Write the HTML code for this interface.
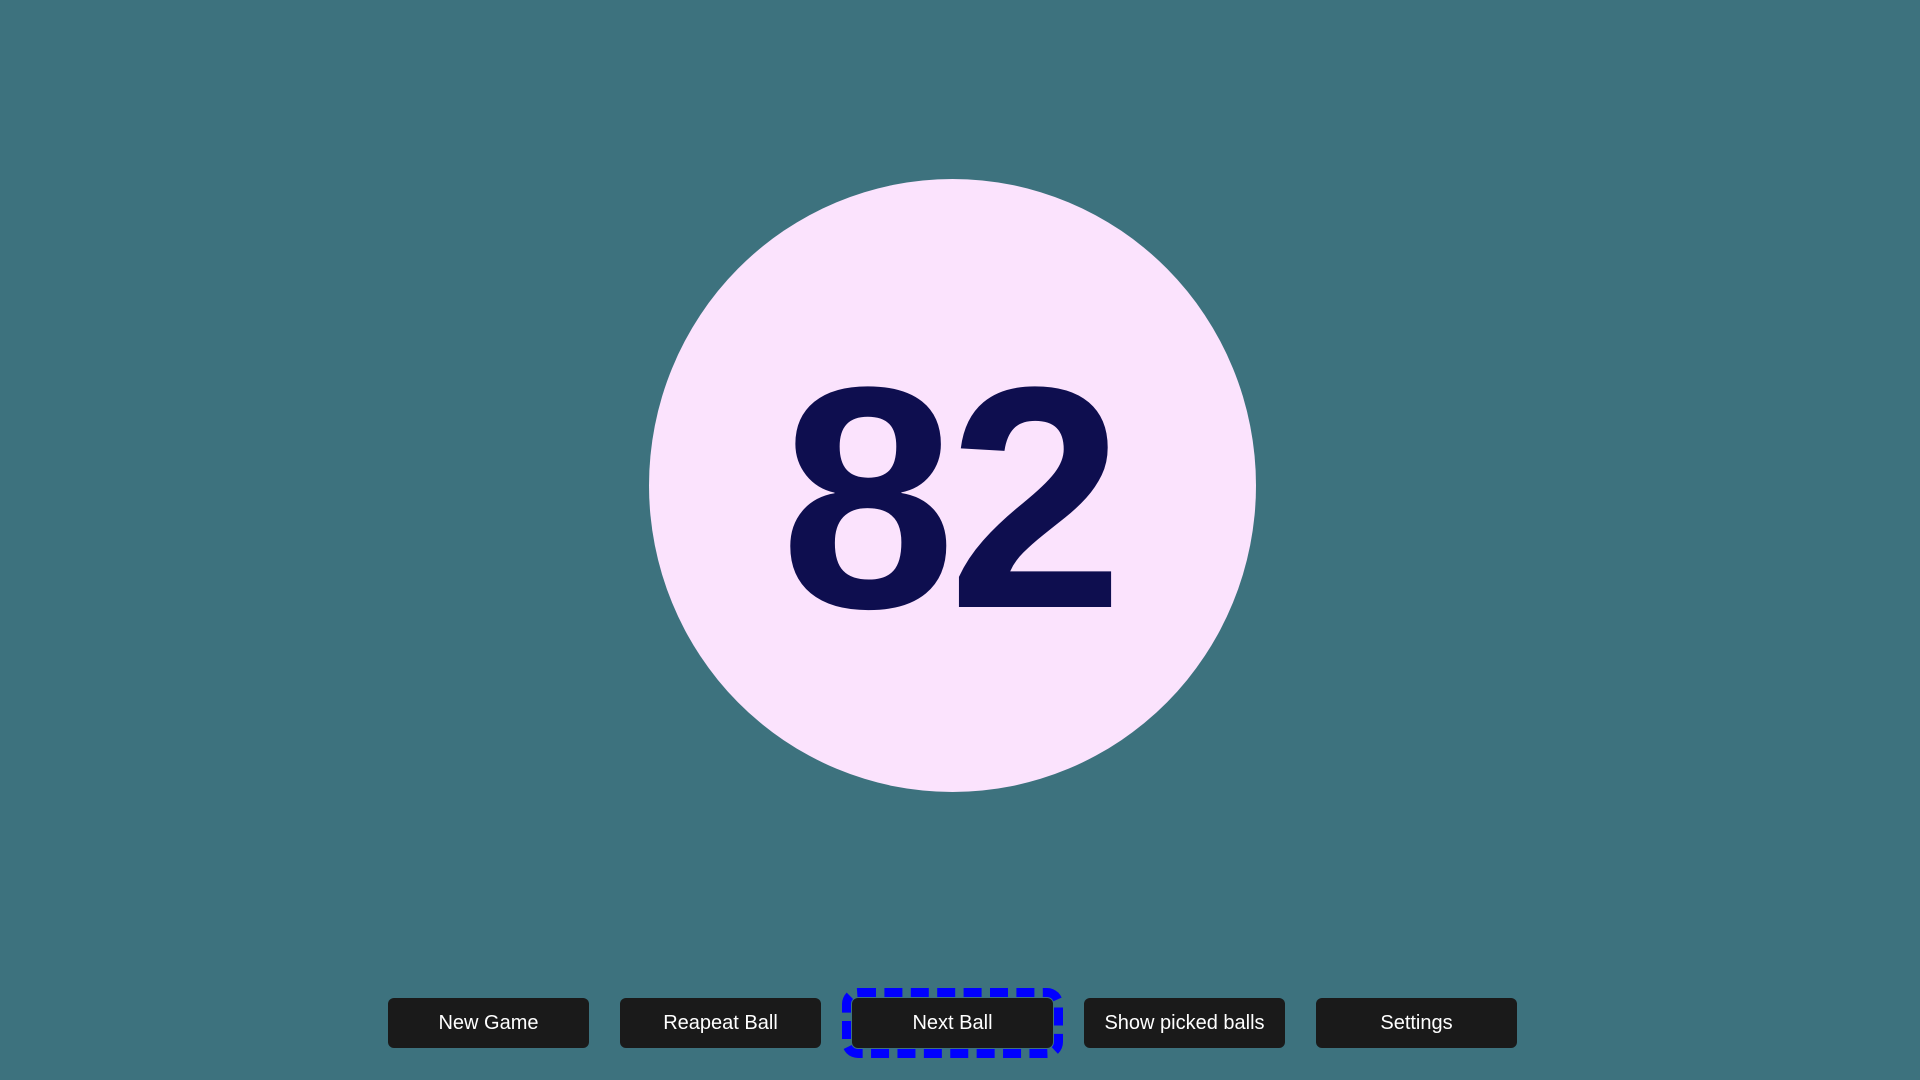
<!DOCTYPE html>
<html><head><meta charset="utf-8"><style>
html,body{margin:0;padding:0;width:1920px;height:1080px;overflow:hidden;background:#3d727e;font-family:"Liberation Sans",Arial,sans-serif}
.ball{position:absolute;left:649px;top:179px;width:607px;height:613px;border-radius:50%;background:#fbe3fd}
.num{position:absolute;left:0;width:1896px;top:348px;text-align:center;font-weight:bold;font-size:316px;line-height:300px;color:#0e0e4f;letter-spacing:-8px}
.btn{position:absolute;top:998px;width:201px;height:50px;border-radius:6px;background:#1a1a1a;color:#fff;font-size:20px;line-height:50px;text-align:center}
.focus{outline:9px dashed #0000ff;outline-offset:1px}
</style></head><body>
<div class="ball"></div>
<div class="num">82</div>
<div class="btn" style="left:388px">New Game</div>
<div class="btn" style="left:620px">Reapeat Ball</div>
<div class="btn focus" style="left:852px">Next Ball</div>
<div class="btn" style="left:1084px">Show picked balls</div>
<div class="btn" style="left:1316px">Settings</div>
</body></html>
